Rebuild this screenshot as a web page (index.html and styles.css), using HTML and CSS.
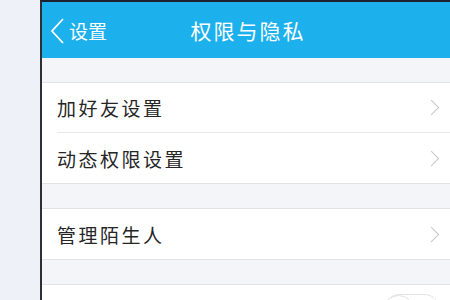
FILE: index.html
```html
<!DOCTYPE html>
<html lang="zh-CN">
<head>
    <meta charset="UTF-8">
    <title>权限与隐私</title>
    <link rel="stylesheet" href="styles.css">
</head>
<body>
    <div class="side"></div>
    <div class="phone">
        <div class="header">
            <div class="back">
                <svg width="16" height="26" viewBox="0 0 16 26">
                    <path d="M13 1 L2 13 L13 25" fill="none" stroke="#fff" stroke-width="1.8"/>
                </svg>
                <span>设置</span>
            </div>
            <div class="title">权限与隐私</div>
        </div>

        <div class="gap"></div>
        <div class="group">
            <div class="row">
                <span class="label">加好友设置</span>
                <span class="arrow"></span>
            </div>
            <div class="row">
                <span class="label">动态权限设置</span>
                <span class="arrow"></span>
            </div>
        </div>

        <div class="gap"></div>
        <div class="group">
            <div class="row">
                <span class="label">管理陌生人</span>
                <span class="arrow"></span>
            </div>
        </div>

        <div class="gap"></div>
        <div class="group">
            <div class="row row-switch">
                <span class="label">允许附近的人查看我</span>
                <span class="switch"><span class="knob"></span></span>
            </div>
        </div>
    </div>
</body>
</html>
```

FILE: styles.css
```css
* {
    padding: 0;
    margin: 0;
    box-sizing: border-box;
}

body {
    display: flex;
    width: 450px;
    height: 300px;
    overflow: hidden;
    background-color: #eef2f8;
    font-family: "Noto Sans CJK SC", "Noto Sans", sans-serif;
}

.side {
    width: 40px;
    flex-shrink: 0;
    background-color: #eef2f8;
}

.phone {
    flex: 1;
    border-left: 2px solid #2c2f36;
    border-top: 2px solid #1d2230;
    background-color: #f4f5f8;
}

.header {
    position: relative;
    height: 56px;
    background-color: #1cb0ed;
    color: #fff;
    display: flex;
    align-items: center;
    justify-content: center;
}

.back {
    position: absolute;
    left: 8px;
    top: 15px;
    display: flex;
    align-items: center;
    gap: 3px;
    font-size: 19px;
}

.title {
    font-size: 21px;
    letter-spacing: 2px;
    margin-left: 4px;
}

.gap {
    height: 25px;
    border-bottom: 1px solid #e2e3e6;
}

.group {
    background-color: #fff;
    border-bottom: 1px solid #e2e3e6;
}

.row {
    height: 50px;
    margin-left: 15px;
    padding-right: 10px;
    display: flex;
    align-items: center;
    justify-content: space-between;
    border-bottom: 1px solid #e8e8eb;
}

.row:last-child {
    border-bottom: none;
}

.label {
    font-size: 19px;
    letter-spacing: 2.5px;
    color: #262626;
}

.arrow {
    width: 11px;
    height: 11px;
    margin-right: 3px;
    border-top: 1.8px solid #c6c6cb;
    border-right: 1.8px solid #c6c6cb;
    transform: rotate(45deg);
}

.row-switch {
    height: 54px;
    align-items: flex-start;
    padding-top: 11px;
}

.switch {
    width: 58px;
    height: 34px;
    margin-right: -1px;
    margin-top: -2px;
    border: 1.5px solid #e3e3e6;
    border-radius: 17px;
    display: flex;
}

.knob {
    width: 31px;
    height: 31px;
    border: 1.5px solid #e3e3e6;
    border-radius: 50%;
    margin-left: -1px;
    margin-top: -0.5px;
}
```
